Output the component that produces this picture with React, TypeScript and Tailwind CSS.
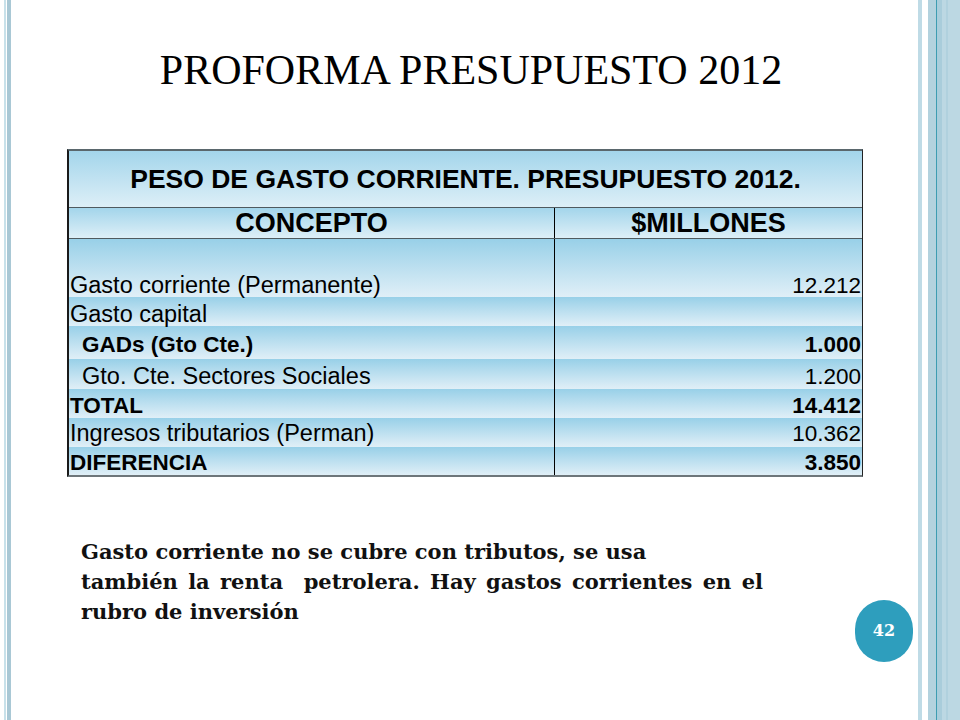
import React from "react";

type Row = {
  label: string;
  value: string;
  bold?: boolean;
  indent?: boolean;
  h: string;
  pb: string;
};

const rows: Row[] = [
  { label: "Gasto corriente (Permanente)", value: "12.212", h: "h-[58px]", pb: "pb-[0px]" },
  { label: "Gasto capital", value: "", h: "h-[29px]", pb: "pb-[0px]" },
  { label: "GADs (Gto Cte.)", value: "1.000", bold: true, indent: true, h: "h-[33px]", pb: "pb-[3px]" },
  { label: "Gto. Cte. Sectores Sociales", value: "1.200", indent: true, h: "h-[30px]", pb: "pb-[1px]" },
  { label: "TOTAL", value: "14.412", bold: true, h: "h-[29px]", pb: "pb-[1px]" },
  { label: "Ingresos tributarios (Perman)", value: "10.362", h: "h-[29px]", pb: "pb-[2px]" },
  { label: "DIFERENCIA", value: "3.850", bold: true, h: "h-[28px]", pb: "pb-[1px]" },
];

export default function App() {
  return (
    <div className="w-[960px] h-[720px] bg-white flex relative overflow-hidden">
      {/* left border stripes */}
      <div className="w-[4px] h-full bg-white" />
      <div className="w-[2px] h-full bg-[#c8e1ea]" />
      <div className="w-[1px] h-full bg-white" />
      <div className="w-[4px] h-full bg-[#a9c8d5]" />

      {/* content */}
      <div className="flex-1 flex flex-col">
        <div
          className="pt-[49px] pl-[13px] text-center text-[42px] leading-none text-black"
          style={{ fontFamily: '"Liberation Serif", "Times New Roman", serif' }}
        >
          PROFORMA PRESUPUESTO 2012
        </div>

        <div
          className="mt-[58px] ml-[56px] w-[796px] border-l-2 border-l-[#1a1a1a] border-r border-r-[#222] border-t-2 border-t-[#5a676d] border-b-2 border-b-[#6d767a] text-black"
          style={{ fontFamily: '"Liberation Sans", Arial, sans-serif' }}
        >
          <div className="h-[57px] flex items-center justify-center bg-linear-to-b from-[#a3d5eb] to-[#ddeff7] border-b border-b-[#4f5a5f] font-bold text-[26.5px] leading-none">
            PESO DE GASTO CORRIENTE. PRESUPUESTO 2012.
          </div>
          <div className="h-[31px] flex bg-linear-to-b from-[#a3d5eb] to-[#ddeff7] border-b border-b-[#4f5a5f] font-bold text-[27px] leading-none">
            <div className="w-[486px] flex items-center justify-center border-r border-r-black">CONCEPTO</div>
            <div className="flex-1 flex items-center justify-center">$MILLONES</div>
          </div>
          {rows.map((r, i) => (
            <div key={i} className={`${r.h} flex bg-linear-to-b from-[#98d0e8] to-[#e0eff7] leading-none`}>
              <div
                className={`w-[486px] flex items-end border-r border-r-black ${r.pb} ${
                  r.indent ? "pl-[13px]" : "pl-[1px]"
                } ${r.bold ? "font-bold text-[22.5px]" : "text-[23.5px]"}`}
              >
                {r.label}
              </div>
              <div
                className={`flex-1 flex items-end justify-end pr-[1px] ${r.pb} text-[22.5px] ${
                  r.bold ? "font-bold" : ""
                }`}
              >
                {r.value}
              </div>
            </div>
          ))}
        </div>

        <div
          className="mt-[60px] ml-[70px] font-bold text-[21px] leading-[30px] text-[#111]"
          style={{ fontFamily: '"DejaVu Serif", "Liberation Serif", serif' }}
        >
          <div>Gasto corriente no se cubre con tributos, se usa</div>
          <div className="[word-spacing:3px]">también la renta&nbsp; petrolera. Hay gastos corrientes en el</div>
          <div>rubro de inversión</div>
        </div>
      </div>

      {/* right border stripes */}
      <div className="w-[4px] h-full bg-[#bfdbe6]" />
      <div className="w-[6px] h-full bg-white" />
      <div className="w-[8px] h-full bg-[#b3d2de]" />
      <div className="w-[1px] h-full bg-[#3d9cb1]" />
      <div className="w-[5px] h-full bg-[#a9cddb]" />
      <div className="w-[4px] h-full bg-[#bcd8e3]" />
      <div className="w-[2px] h-full bg-[#b0d1de]" />
      <div className="w-[12px] h-full bg-[#bcd8e3]" />

      {/* slide number */}
      <div
        className="absolute left-[855px] top-[600px] w-[58px] h-[62px] rounded-full bg-[#2e9ebd] flex items-center justify-center text-white font-bold text-[16px]"
        style={{ fontFamily: '"DejaVu Serif", "Liberation Serif", serif' }}
      >
        42
      </div>
    </div>
  );
}
